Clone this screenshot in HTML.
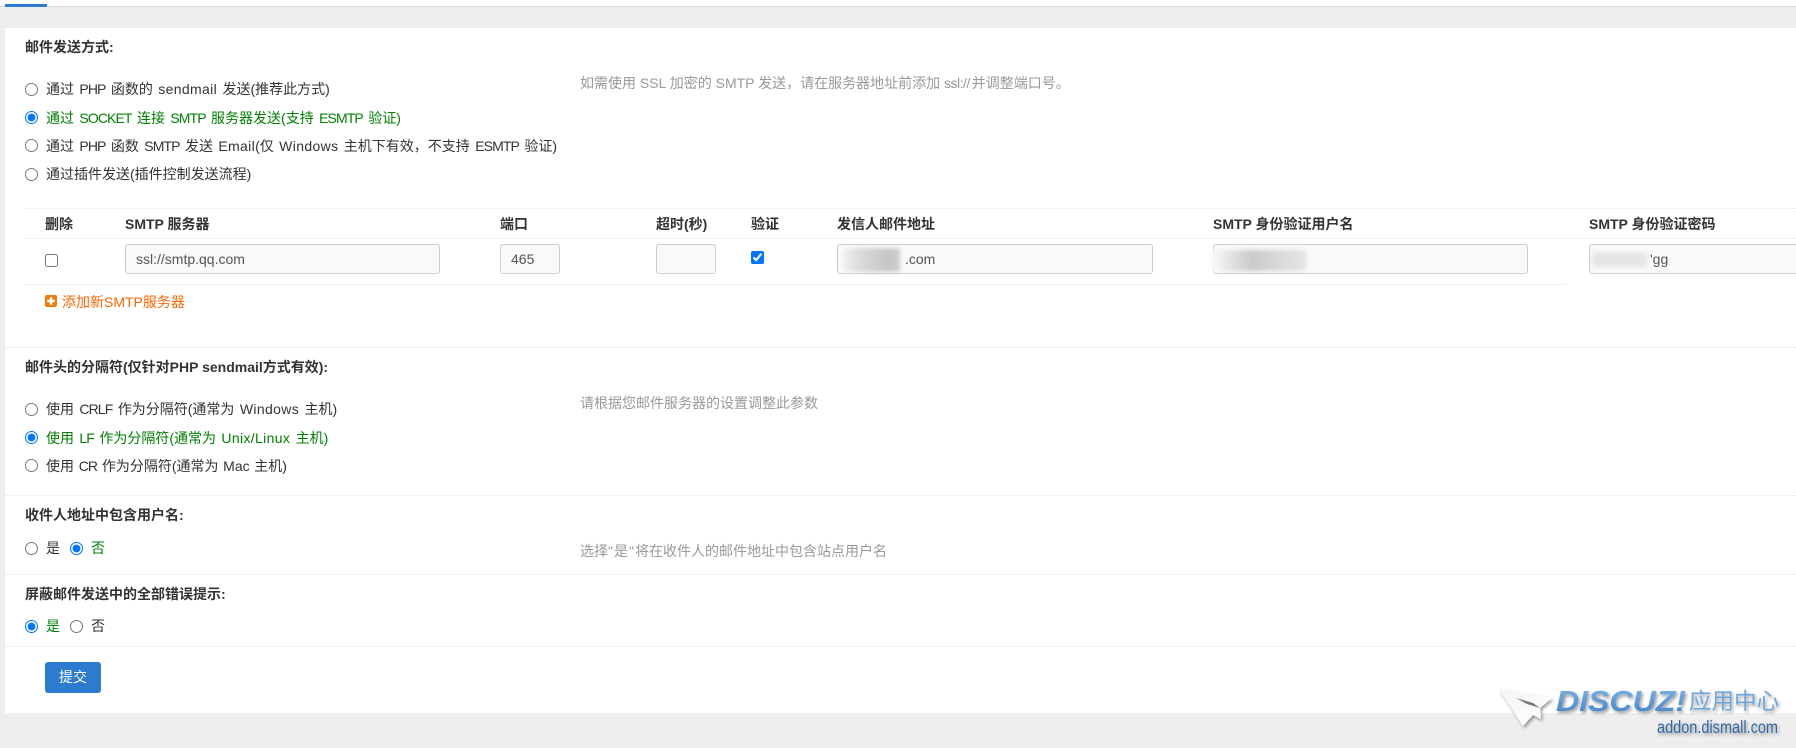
<!DOCTYPE html>
<html lang="zh"><head><meta charset="utf-8"><title>邮件设置</title>
<style>
*{box-sizing:border-box}
html,body{margin:0;padding:0;width:1796px;height:748px;overflow:hidden;background:#eee;font-family:"Liberation Sans","Noto Sans CJK SC",sans-serif;font-size:14px;color:#333}
.a{position:absolute;white-space:nowrap;line-height:20px}
.b{font-weight:bold}
.g{color:#008000}
.h{color:#999}
.n{word-spacing:1.5px}
.c{letter-spacing:-.9px}
.w{letter-spacing:.35px}
.l{position:absolute;left:5px;right:0;height:0;border-top:1px dotted #d5e8f5}
input[type=radio],input[type=checkbox]{position:absolute;margin:0;width:13px;height:13px}
.i{position:absolute;top:244px;height:30px;background:#f9f9f9;border:1px solid #ccc;border-radius:3px;color:#555;line-height:28px;padding-left:10px;font-size:14px;overflow:hidden}
.bl{position:absolute;filter:blur(2px);border-radius:3px}
</style></head><body>
<div style="position:absolute;left:0;top:0;width:1796px;height:7px;background:#fff;border-bottom:1px solid #d9d9d9"></div>
<div style="position:absolute;left:5px;top:4px;width:42px;height:3px;background:#2d7bcf"></div>
<div style="position:absolute;left:5px;top:28px;width:1791px;height:685px;background:#fff"></div>

<div class="a b" style="left:25px;top:37px">邮件发送方式:</div>
<input type="radio" name="m" style="left:25px;top:83px"><div class="a n" style="left:46px;top:79px">通过 <span class="c">PHP</span> 函数的 <span class="w">sendmail</span> 发送(推荐此方式)</div>
<input type="radio" name="m" checked style="left:25px;top:111px"><div class="a g n" style="left:46px;top:108px">通过 <span class="c">SOCKET</span> 连接 <span class="c">SMTP</span> 服务器发送(支持 <span class="c">ESMTP</span> 验证)</div>
<input type="radio" name="m" style="left:25px;top:139px"><div class="a n" style="left:46px;top:136px">通过 <span class="c">PHP</span> 函数 <span class="c">SMTP</span> 发送 <span class="w">Email</span>(仅 <span class="w">Windows</span> 主机下有效，不支持 <span class="c">ESMTP</span> 验证)</div>
<input type="radio" name="m" style="left:25px;top:168px"><div class="a" style="left:46px;top:164px">通过插件发送(插件控制发送流程)</div>
<div class="a h" style="left:580px;top:73px">如需使用 SSL 加密的 SMTP 发送，请在服务器地址前添加 <span style="letter-spacing:-.5px">ssl://</span> <span style="margin-left:-2px">并调整端口号。</span></div>

<div class="l" style="left:25px;top:208px"></div>
<div class="a b" style="left:45px;top:214px">删除</div>
<div class="a b" style="left:125px;top:214px">SMTP 服务器</div>
<div class="a b" style="left:500px;top:214px">端口</div>
<div class="a b" style="left:656px;top:214px">超时(秒)</div>
<div class="a b" style="left:751px;top:214px">验证</div>
<div class="a b" style="left:837px;top:214px">发信人邮件地址</div>
<div class="a b" style="left:1213px;top:214px">SMTP 身份验证用户名</div>
<div class="a b" style="left:1589px;top:214px">SMTP 身份验证密码</div>
<div class="l" style="left:25px;top:238px"></div>

<input type="checkbox" style="left:45px;top:254px">
<div class="i" style="left:125px;width:315px">ssl://smtp.qq.com</div>
<div class="i" style="left:500px;width:60px">465</div>
<div class="i" style="left:656px;width:60px"></div>
<input type="checkbox" checked style="left:751px;top:251px">
<div class="i" style="left:837px;width:316px"><span style="margin-left:57px">.com</span></div>
<div class="i" style="left:1213px;width:315px"></div>
<div class="i" style="left:1589px;width:220px"><span style="margin-left:50px">'gg</span></div>
<div class="bl" style="left:844px;top:248px;width:56px;height:24px;background:linear-gradient(90deg,#eee,#d8d8d8 35%,#c6c6c6 75%,#ccc)"></div>
<div class="bl" style="left:1208px;top:250px;width:98px;height:21px;background:linear-gradient(90deg,#fff,#e6e6e6 20%,#c9c9c9 45%,#ddd 80%,#e4e4e4)"></div>
<div class="bl" style="left:1592px;top:252px;width:55px;height:15px;background:#e6e6e6"></div>
<div class="l" style="left:25px;top:284px;width:1541px"></div>

<svg style="position:absolute;left:45px;top:295px" width="12" height="12" viewBox="0 0 12 12"><rect width="12" height="12" rx="2" fill="#f47a0c"/><path d="M6 2.2v7.6M2.2 6h7.6" stroke="#fff" stroke-width="2.4"/></svg>
<div class="a" style="left:62px;top:292px;color:#f60">添加新SMTP服务器</div>

<div class="l" style="top:347px"></div>
<div class="a b" style="left:25px;top:357px">邮件头的分隔符(仅针对PHP sendmail方式有效):</div>
<input type="radio" name="s" style="left:25px;top:403px"><div class="a n" style="left:46px;top:399px">使用 <span class="c">CRLF</span> 作为分隔符(通常为 <span class="w">Windows</span> 主机)</div>
<input type="radio" name="s" checked style="left:25px;top:431px"><div class="a g n" style="left:46px;top:428px">使用 <span class="c">LF</span> 作为分隔符(通常为 <span class="w">Unix/Linux</span> 主机)</div>
<input type="radio" name="s" style="left:25px;top:459px"><div class="a n" style="left:46px;top:456px;word-spacing:.8px">使用 <span class="c">CR</span> 作为分隔符(通常为 Mac 主机)</div>
<div class="a h" style="left:580px;top:393px">请根据您邮件服务器的设置调整此参数</div>

<div class="l" style="top:495px"></div>
<div class="a b" style="left:25px;top:505px">收件人地址中包含用户名:</div>
<input type="radio" name="u" style="left:25px;top:542px"><div class="a" style="left:46px;top:538px">是</div>
<input type="radio" name="u" checked style="left:70px;top:542px"><div class="a g" style="left:91px;top:538px">否</div>
<div class="a h" style="left:580px;top:541px">选择<span style="letter-spacing:1px">"是"</span>将在收件人的邮件地址中包含站点用户名</div>

<div class="l" style="top:574px"></div>
<div class="a b" style="left:25px;top:584px">屏蔽邮件发送中的全部错误提示:</div>
<input type="radio" name="e" checked style="left:25px;top:620px"><div class="a g" style="left:46px;top:616px">是</div>
<input type="radio" name="e" style="left:70px;top:620px"><div class="a" style="left:91px;top:616px">否</div>

<div class="l" style="top:646px"></div>
<div class="a" style="left:45px;top:662px;width:56px;height:31px;background:#2d7bcf;border-radius:3px;color:#fff;text-align:center;line-height:31px">提交</div>

<svg style="position:absolute;left:1490px;top:680px" width="306" height="68" viewBox="1490 680 306 68">
<defs>
<linearGradient id="d" x1="0" y1="0" x2="0" y2="1"><stop offset="0" stop-color="#7fb4e6"/><stop offset="1" stop-color="#3f7fc2"/></linearGradient>
<linearGradient id="f" x1="0" y1="0" x2="1" y2="1"><stop offset="0" stop-color="#f4f4f4"/><stop offset="1" stop-color="#fff"/></linearGradient>
<filter id="s" x="-20%" y="-20%" width="150%" height="160%"><feDropShadow dx="1.5" dy="2" stdDeviation="1.5" flood-color="#000" flood-opacity=".4"/></filter>
</defs>
<g filter="url(#s)">
<path d="M1499 689L1552 698L1540 708L1541 719L1533 715L1523 726Z" fill="url(#f)"/>
<path d="M1516 698L1533 703L1540 708L1527 704Z" fill="#777"/>
<text x="1556" y="711" font-family="Liberation Sans" font-weight="bold" font-style="italic" font-size="29" fill="url(#d)" textLength="130" lengthAdjust="spacingAndGlyphs">DISCUZ!</text>
<text x="1689" y="709" font-family="Noto Sans CJK SC" font-size="22.5" fill="#6ea6dc">应用中心</text>
<text x="1657" y="733" font-family="Liberation Sans" font-size="17.5" fill="#3568a3" textLength="121" lengthAdjust="spacingAndGlyphs">addon.dismall.com</text>
</g>
</svg>
</body></html>
